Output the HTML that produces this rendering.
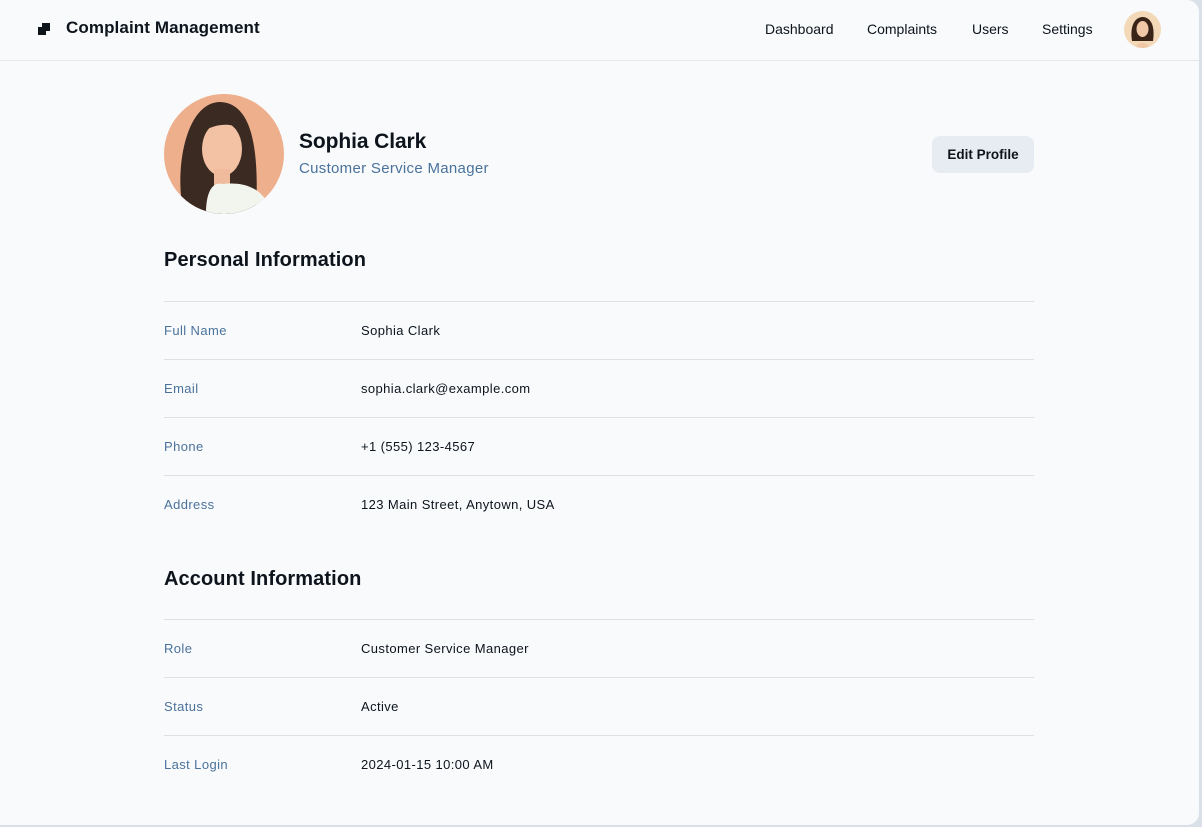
<!DOCTYPE html>
<html><head><meta charset="utf-8"><style>
*{box-sizing:border-box;margin:0;padding:0}
body{width:1202px;height:827px;background:#d9e0e8;font-family:"Liberation Sans",sans-serif;color:#0d141c;overflow:hidden}
.win{position:absolute;left:0;top:0;width:1199px;height:825px;background:#f8fafc;border-radius:0 12px 12px 0;overflow:hidden}
.hdr{height:61px;border-bottom:1px solid #e5e8eb;position:relative}
.logo{position:absolute;left:38px;top:23px}
.title{position:absolute;left:66px;top:18px;font-size:17px;font-weight:bold;letter-spacing:0.1px}
.nav{position:absolute;top:21px;font-size:14px}
.av{position:absolute;left:1124px;top:11px;width:37px;height:37px;border-radius:50%;overflow:hidden;background:#f3d9b8}
.big{position:absolute;left:164px;top:94px;width:120px;height:120px;border-radius:50%;overflow:hidden;background:#eeaf8d}
.name{position:absolute;left:299px;top:130px;font-size:21px;font-weight:bold;letter-spacing:-0.1px}
.role{position:absolute;left:299px;top:160px;font-size:15px;color:#4b729b;letter-spacing:0.3px}
.btn{position:absolute;left:932px;top:136px;width:102px;height:37px;background:#e7ecf2;border-radius:8px;font-size:13.5px;font-weight:bold;text-align:center;line-height:37px}
h2{position:absolute;left:164px;font-size:20px;font-weight:bold;letter-spacing:0.1px}
.row{position:absolute;left:164px;width:870px;height:58px;border-top:1px solid #dde1e6;font-size:13px;letter-spacing:0.4px}
.row .k{position:absolute;left:0;top:21px;color:#4b729b}
.row .v{position:absolute;left:197px;top:21px}
</style></head><body><div class="win">
<div class="hdr">
<svg class="logo" width="12" height="12" viewBox="0 0 12 12"><rect x="0" y="4" width="8" height="8" fill="#0d141c"/><rect x="4" y="0" width="8" height="8" fill="#0d141c"/></svg>
<div class="title">Complaint Management</div>
<div class="nav" style="left:765px">Dashboard</div>
<div class="nav" style="left:867px">Complaints</div>
<div class="nav" style="left:972px">Users</div>
<div class="nav" style="left:1042px">Settings</div>
<div class="av"><svg width="37" height="37" viewBox="0 0 37 37"><path d="M8 30 C6 18 9 7 18 6 C28 6 31 17 29 30 Z" fill="#3a2418"/><ellipse cx="18.5" cy="18" rx="6" ry="8" fill="#f0c8a8"/><path d="M12 37 C12 30 25 30 25 37Z" fill="#f0c8a8"/></svg></div>
</div>
<div class="big"><svg width="120" height="120" viewBox="0 0 120 120"><path d="M20 120 C10 80 20 10 55 8 C90 8 95 60 92 120Z" fill="#3b2a22"/><ellipse cx="58" cy="55" rx="20" ry="27" fill="#f3c2a4"/><path d="M50 75 L50 92 L66 92 L66 75Z" fill="#f0bb9c"/><path d="M42 120 C42 95 50 88 58 90 C75 88 100 90 108 120Z" fill="#f2f4ee"/><path d="M36 40 C40 20 70 15 80 38 C72 28 50 28 36 40Z" fill="#3b2a22"/></svg></div>
<div class="name">Sophia Clark</div>
<div class="role">Customer Service Manager</div>
<div class="btn">Edit Profile</div>
<h2 style="top:249px">Personal Information</h2>
<div class="row" style="top:301px"><div class="k">Full Name</div><div class="v">Sophia Clark</div></div>
<div class="row" style="top:359px"><div class="k">Email</div><div class="v">sophia.clark@example.com</div></div>
<div class="row" style="top:417px"><div class="k">Phone</div><div class="v">+1 (555) 123-4567</div></div>
<div class="row" style="top:475px"><div class="k">Address</div><div class="v">123 Main Street, Anytown, USA</div></div>
<h2 style="top:568px">Account Information</h2>
<div class="row" style="top:619px"><div class="k">Role</div><div class="v">Customer Service Manager</div></div>
<div class="row" style="top:677px"><div class="k">Status</div><div class="v">Active</div></div>
<div class="row" style="top:735px"><div class="k">Last Login</div><div class="v">2024-01-15 10:00 AM</div></div>
</div></body></html>
